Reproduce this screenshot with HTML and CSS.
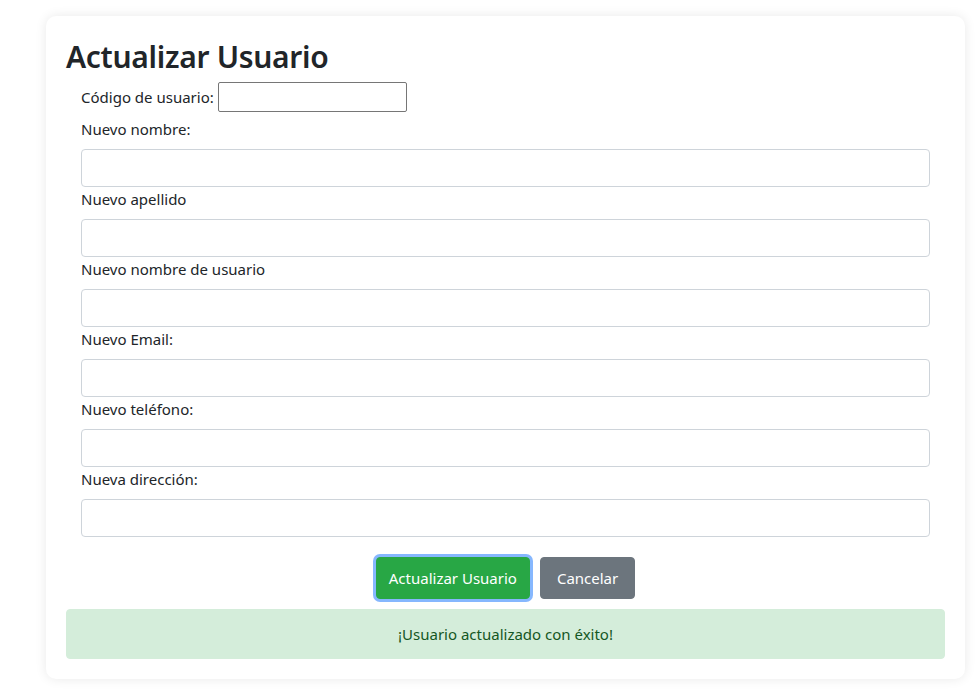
FILE: index.html
```html
<!DOCTYPE html>
<html lang="es">
<head>
<meta charset="utf-8">
<title>Actualizar Usuario</title>
<link rel="stylesheet" href="styles.css">
</head>
<body>
<div class="page">
  <div class="card">
    <h2 class="title">Actualizar Usuario</h2>
    <form class="form">
      <div class="code-row">
        <label class="code-label" for="codigo">Código de usuario:</label>
        <input class="code-input" id="codigo" type="text">
      </div>
      <div class="field">
        <label class="field-label" for="nombre">Nuevo nombre:</label>
        <input class="field-input" id="nombre" type="text">
      </div>
      <div class="field">
        <label class="field-label" for="apellido">Nuevo apellido</label>
        <input class="field-input" id="apellido" type="text">
      </div>
      <div class="field">
        <label class="field-label" for="usuario">Nuevo nombre de usuario</label>
        <input class="field-input" id="usuario" type="text">
      </div>
      <div class="field">
        <label class="field-label" for="email">Nuevo Email:</label>
        <input class="field-input" id="email" type="text">
      </div>
      <div class="field">
        <label class="field-label" for="telefono">Nuevo teléfono:</label>
        <input class="field-input" id="telefono" type="text">
      </div>
      <div class="field">
        <label class="field-label" for="direccion">Nueva dirección:</label>
        <input class="field-input" id="direccion" type="text">
      </div>
      <div class="actions">
        <button type="button" class="btn btn-success">Actualizar Usuario</button>
        <button type="button" class="btn btn-secondary">Cancelar</button>
      </div>
    </form>
    <div class="alert">¡Usuario actualizado con éxito!</div>
  </div>
</div>
</body>
</html>
```
FILE: styles.css
```css
* { box-sizing: border-box; }
html, body { margin: 0; padding: 0; background: #fff; }
body {
  font-family: "Noto Sans", "Open Sans", sans-serif;
  font-size: 15px;
  line-height: 24px;
  color: #212529;
}
.page {
  padding: 16px 12px 16px 46px;
}
.card {
  width: 919px;
  background: #fff;
  border-radius: 10px;
  box-shadow: 0 0 12px rgba(0, 0, 0, 0.09);
  padding: 20px;
}
.title {
  margin: 0 0 4px 0;
  font-size: 30px;
  line-height: 42px;
  font-weight: 600;
  letter-spacing: -0.3px;
}
.form {
  padding: 0 15px;
  margin: 0;
}
.code-row {
  display: flex;
  align-items: center;
  gap: 4px;
  margin-bottom: 5px;
}
.code-input {
  width: 189px;
  height: 30px;
  border: 1px solid #767676;
  border-radius: 2px;
  font: inherit;
  padding: 1px 2px;
}
.field-label {
  display: block;
  margin-bottom: 8px;
}
.field-input {
  display: block;
  width: 100%;
  height: 38px;
  border: 1px solid #ced4da;
  border-radius: 4px;
  font: inherit;
  padding: 6px 12px;
}
.actions {
  display: flex;
  justify-content: center;
  gap: 10px;
  margin-top: 20px;
}
.btn {
  font: inherit;
  font-size: 15px;
  line-height: 24px;
  padding: 8px 12px;
  border-radius: 4px;
  border: 1px solid transparent;
  color: #fff;
  cursor: pointer;
}
.btn-success {
  background: #28a745;
  border-color: #28a745;
  box-shadow: 0 0 0 3px #86b7fe;
  outline: none;
}
.btn-secondary {
  background: #6c757d;
  border-color: #6c757d;
  padding: 8px 16px;
}
.alert {
  margin-top: 10px;
  padding: 12px 20px;
  background: #d4edda;
  border: 1px solid #d4edda;
  border-radius: 4px;
  color: #155724;
  text-align: center;
  font-size: 15px;
}
```
